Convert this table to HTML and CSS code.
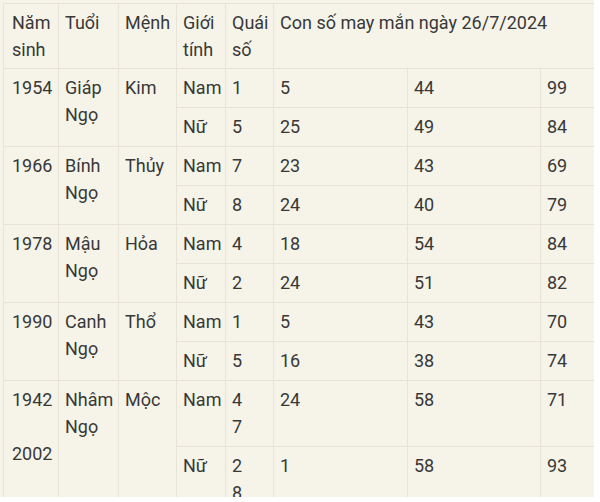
FILE: index.html
```html
<!DOCTYPE html>
<html lang="vi">
<head>
<meta charset="utf-8">
<link rel="stylesheet" href="styles.css">
</head>
<body>
<div class="wrap">
<table class="lucky">
<colgroup>
<col class="c-year"><col class="c-age"><col class="c-elem"><col class="c-sex"><col class="c-num"><col class="c-n1"><col class="c-n2"><col class="c-n3">
</colgroup>
<thead>
<tr><th class="first">Năm sinh</th><th>Tuổi</th><th>Mệnh</th><th>Giới tính</th><th>Quái số</th><th colspan="3">Con số may mắn ngày 26/7/2024</th></tr>
</thead>
<tbody>
<tr><td class="first" rowspan="2">1954</td><td rowspan="2">Giáp Ngọ</td><td rowspan="2">Kim</td><td>Nam</td><td>1</td><td>5</td><td>44</td><td>99</td></tr>
<tr><td>Nữ</td><td>5</td><td>25</td><td>49</td><td>84</td></tr>
<tr><td class="first" rowspan="2">1966</td><td rowspan="2">Bính Ngọ</td><td rowspan="2">Thủy</td><td>Nam</td><td>7</td><td>23</td><td>43</td><td>69</td></tr>
<tr><td>Nữ</td><td>8</td><td>24</td><td>40</td><td>79</td></tr>
<tr><td class="first" rowspan="2">1978</td><td rowspan="2">Mậu Ngọ</td><td rowspan="2">Hỏa</td><td>Nam</td><td>4</td><td>18</td><td>54</td><td>84</td></tr>
<tr><td>Nữ</td><td>2</td><td>24</td><td>51</td><td>82</td></tr>
<tr><td class="first" rowspan="2">1990</td><td rowspan="2">Canh Ngọ</td><td rowspan="2">Thổ</td><td>Nam</td><td>1</td><td>5</td><td>43</td><td>70</td></tr>
<tr><td>Nữ</td><td>5</td><td>16</td><td>38</td><td>74</td></tr>
<tr><td class="first" rowspan="2">1942<br><br>2002</td><td rowspan="2">Nhâm Ngọ</td><td rowspan="2">Mộc</td><td>Nam</td><td>4<br>7</td><td>24</td><td>58</td><td>71</td></tr>
<tr><td>Nữ</td><td>2<br>8</td><td>1</td><td>58</td><td>93</td></tr>
</tbody>
</table>
</div>
</body>
</html>
```

FILE: styles.css
```css
html, body {
  margin: 0;
  padding: 0;
  background: #ffffff;
}
.wrap {
  width: 591px;
  height: 494px;
  padding: 3px 0 0 3px;
  background: #f6f4e9;
  overflow: hidden;
}
.lucky {
  border-collapse: collapse;
  table-layout: fixed;
  width: 591px;
  font-family: Roboto, "Noto Sans", sans-serif;
  font-size: 18px;
  line-height: 27px;
  color: #383838;
  background: #f6f4e9;
}
.c-year { width: 55px; }
.c-age { width: 60px; }
.c-elem { width: 58px; }
.c-sex { width: 49px; }
.c-num { width: 48px; }
.c-n1 { width: 134px; }
.c-n2 { width: 133px; }
.c-n3 { width: 54px; }
.lucky th, .lucky td {
  border: 1px solid #e7e4d7;
  padding: 5px 4px 6px 6px;
  text-align: left;
  vertical-align: top;
  font-weight: 400;
}
.lucky th {
  padding-bottom: 5px;
}
.lucky .first {
  padding-left: 8px;
}
```
